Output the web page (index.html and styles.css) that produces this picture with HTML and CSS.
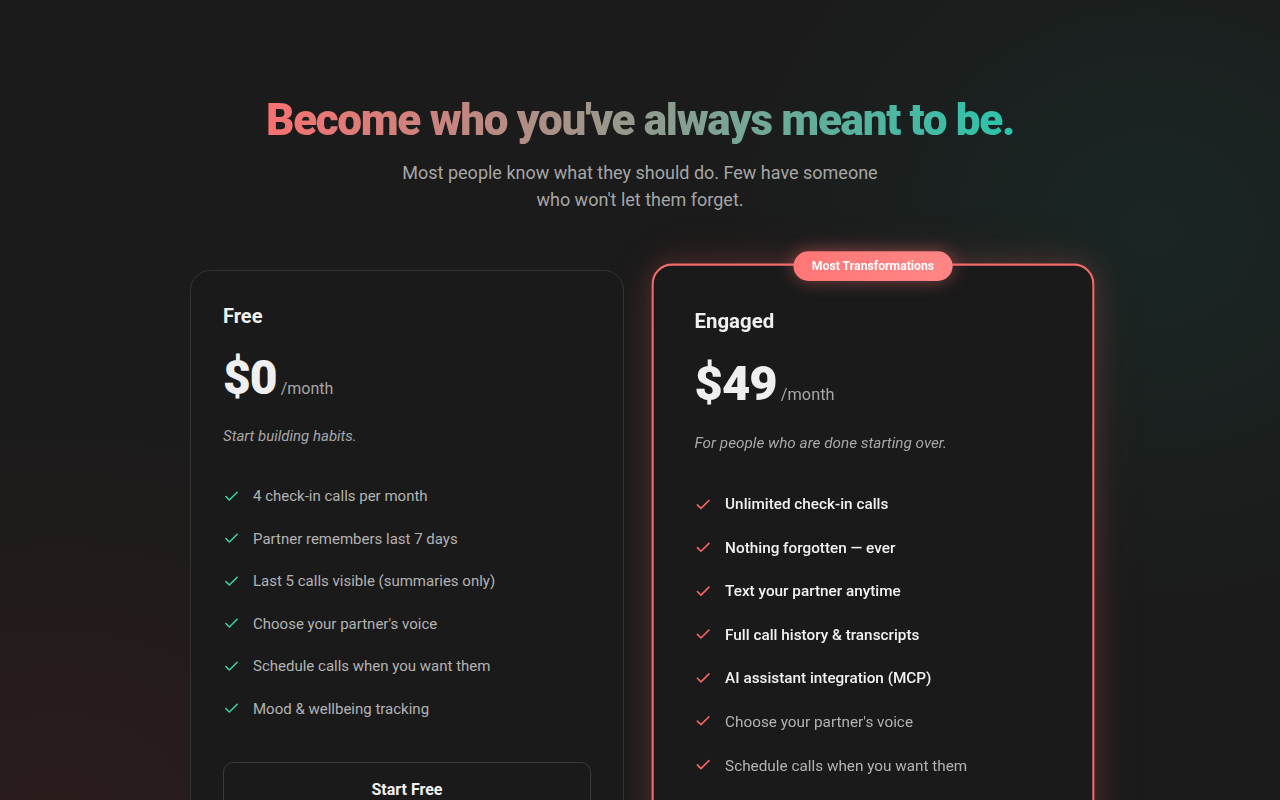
FILE: index.html
```html
<!DOCTYPE html>
<html lang="en">
<head>
<meta charset="utf-8">
<title>Pricing</title>
<link rel="stylesheet" href="styles.css">
</head>
<body>
<main class="page">
  <header class="hero">
    <h1 class="headline">Become who you've always meant to be.</h1>
    <p class="sub">Most people know what they should do. Few have someone<br>who won't let them forget.</p>
  </header>

  <section class="plans">
    <article class="card">
      <h2 class="plan-name">Free</h2>
      <div class="price"><span class="amount">$0</span><span class="per">/month</span></div>
      <p class="tagline">Start building habits.</p>
      <ul class="features">
        <li><svg class="check green" viewBox="0 0 24 24"><polyline points="20 6 9 17 4 12"/></svg><span>4 check-in calls per month</span></li>
        <li><svg class="check green" viewBox="0 0 24 24"><polyline points="20 6 9 17 4 12"/></svg><span>Partner remembers last 7 days</span></li>
        <li><svg class="check green" viewBox="0 0 24 24"><polyline points="20 6 9 17 4 12"/></svg><span>Last 5 calls visible (summaries only)</span></li>
        <li><svg class="check green" viewBox="0 0 24 24"><polyline points="20 6 9 17 4 12"/></svg><span>Choose your partner's voice</span></li>
        <li><svg class="check green" viewBox="0 0 24 24"><polyline points="20 6 9 17 4 12"/></svg><span>Schedule calls when you want them</span></li>
        <li><svg class="check green" viewBox="0 0 24 24"><polyline points="20 6 9 17 4 12"/></svg><span>Mood &amp; wellbeing tracking</span></li>
      </ul>
      <button class="btn">Start Free</button>
    </article>

    <article class="card featured">
      <div class="badge">Most Transformations</div>
      <h2 class="plan-name">Engaged</h2>
      <div class="price"><span class="amount">$49</span><span class="per">/month</span></div>
      <p class="tagline">For people who are done starting over.</p>
      <ul class="features">
        <li class="strong"><svg class="check red" viewBox="0 0 24 24"><polyline points="20 6 9 17 4 12"/></svg><span>Unlimited check-in calls</span></li>
        <li class="strong"><svg class="check red" viewBox="0 0 24 24"><polyline points="20 6 9 17 4 12"/></svg><span>Nothing forgotten — ever</span></li>
        <li class="strong"><svg class="check red" viewBox="0 0 24 24"><polyline points="20 6 9 17 4 12"/></svg><span>Text your partner anytime</span></li>
        <li class="strong"><svg class="check red" viewBox="0 0 24 24"><polyline points="20 6 9 17 4 12"/></svg><span>Full call history &amp; transcripts</span></li>
        <li class="strong"><svg class="check red" viewBox="0 0 24 24"><polyline points="20 6 9 17 4 12"/></svg><span>AI assistant integration (MCP)</span></li>
        <li><svg class="check red" viewBox="0 0 24 24"><polyline points="20 6 9 17 4 12"/></svg><span>Choose your partner's voice</span></li>
        <li><svg class="check red" viewBox="0 0 24 24"><polyline points="20 6 9 17 4 12"/></svg><span>Schedule calls when you want them</span></li>
      </ul>
    </article>
  </section>
</main>
</body>
</html>
```

FILE: styles.css
```css
* { box-sizing: border-box; }

html, body {
  margin: 0;
  padding: 0;
  height: 100%;
}

body {
  font-family: Roboto, Inter, "Noto Sans", "Liberation Sans", sans-serif;
  color: #ededed;
  background-color: #1b1b1b;
  background-image:
    radial-gradient(ellipse 420px 380px at 1150px 230px, rgba(24, 60, 54, 0.35), rgba(24, 60, 54, 0) 100%),
    radial-gradient(ellipse 520px 420px at 60px 820px, rgba(70, 30, 30, 0.38), rgba(70, 30, 30, 0) 100%),
    linear-gradient(180deg, #1b1b1b 0%, #1b1b1b 100%);
  overflow: hidden;
}

.page {
  padding-top: 94px;
}

.hero {
  text-align: center;
}

.headline {
  margin: 0;
  font-size: 44px;
  line-height: 53px;
  font-weight: 900;
  letter-spacing: -0.03em;
  display: inline-block;
  background: linear-gradient(90deg, #f87171 0%, #2cc4ab 100%);
  -webkit-background-clip: text;
  background-clip: text;
  color: transparent;
}

.sub {
  margin: 12px 0 0;
  font-size: 18px;
  line-height: 27px;
  color: #a6a6a6;
}

.plans {
  width: 900px;
  margin: 57px auto 0;
  display: grid;
  grid-template-columns: 1fr 1fr;
  gap: 32px;
  align-items: stretch;
}

.card {
  position: relative;
  background: #1a1a1a;
  border: 1px solid #343434;
  border-radius: 20px;
  padding: 31px 32px 32px;
  display: flex;
  flex-direction: column;
}

.card.featured {
  border: 2px solid #f26b6b;
  padding: 40px 40px 40px;
  min-height: 640px;
  transform: scale(1.02);
  box-shadow: 0 0 28px rgba(242, 107, 107, 0.22), 0 0 60px rgba(242, 107, 107, 0.08);
}

.badge {
  position: absolute;
  top: -14px;
  left: 50%;
  transform: translateX(-50%);
  white-space: nowrap;
  background: linear-gradient(90deg, #ff7676, #ff8686);
  color: #fff;
  font-size: 12px;
  line-height: 15px;
  font-weight: 700;
  padding: 7px 18px;
  border-radius: 999px;
  box-shadow: 0 0 18px rgba(255, 110, 110, 0.45);
}

.plan-name {
  margin: 0;
  font-size: 20px;
  line-height: 28px;
  font-weight: 700;
  color: #f0f0f0;
}

.price {
  margin-top: 24px;
  display: flex;
  align-items: baseline;
  gap: 4px;
}

.amount {
  font-size: 48px;
  line-height: 48px;
  font-weight: 900;
  letter-spacing: -0.02em;
  color: #efefef;
}

.per {
  font-size: 16px;
  color: #a6a6a6;
}

.tagline {
  margin: 23px 0 0;
  font-size: 15px;
  line-height: 22px;
  font-style: italic;
  color: #a8a8a8;
}

.features {
  list-style: none;
  margin: 37px 0 0;
  padding: 0;
  display: flex;
  flex-direction: column;
  gap: 18.6px;
}

.features li {
  display: flex;
  align-items: center;
  gap: 13px;
  font-size: 15px;
  line-height: 24px;
  color: #b3b3b3;
}

.features li.strong {
  color: #f2f2f2;
  font-weight: 500;
}

.check {
  width: 17px;
  height: 17px;
  flex: none;
  fill: none;
  stroke-width: 2.3;
  stroke-linecap: round;
  stroke-linejoin: round;
}

.check.green { stroke: #3ccf9b; }
.check.red { stroke: #f26464; }

.btn {
  margin-top: 41px;
  font-family: inherit;
  font-size: 16px;
  line-height: 22px;
  font-weight: 700;
  color: #f0f0f0;
  background: transparent;
  border: 1px solid #3a3a3a;
  border-radius: 10px;
  padding: 16px 15px 14px;
  width: 100%;
}
```
